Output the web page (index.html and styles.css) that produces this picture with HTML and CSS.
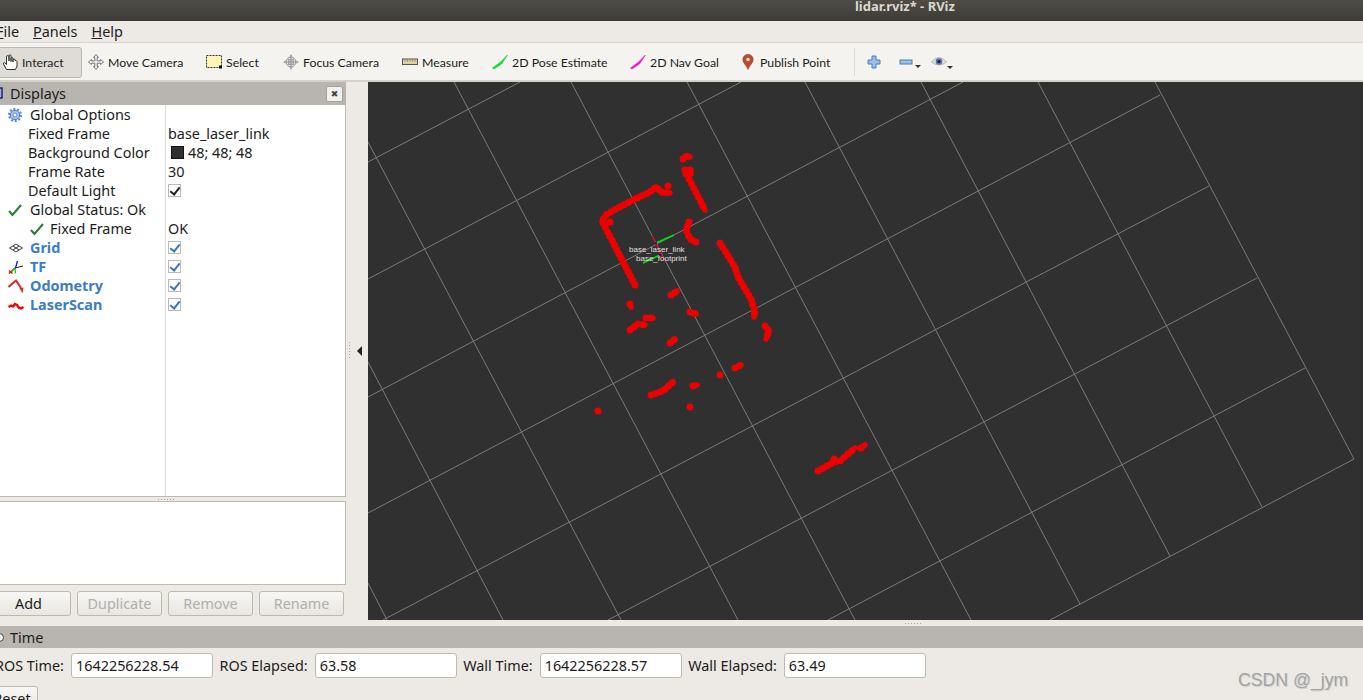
FILE: index.html
```html
<!DOCTYPE html>
<html lang="en">
<head>
    <meta charset="UTF-8">
    <title>lidar.rviz* - RViz</title>
    <link rel="stylesheet" href="styles.css">
</head>
<body>
<div class="window">
    <div class="titlebar"><span class="title">lidar.rviz* - RViz</span></div>

    <div class="menubar">
        <span class="menu-item"><u>F</u>ile</span>
        <span class="menu-item"><u>P</u>anels</span>
        <span class="menu-item"><u>H</u>elp</span>
    </div>

    <div class="toolbar">
        <div class="tool tool-interact active">
            <svg class="icon" viewBox="0 0 16 16"><path d="M4.5 15.5 L1.5 10 Q1 8.5 2.5 8.6 L4.5 10.5 V3 Q4.5 1.5 5.7 1.5 Q7 1.5 7 3 V7 V2 Q7 .8 8 .8 Q9 .8 9 2 V7.5 V4 Q10 3 11 4 V8 V5.5 Q12 4.5 13 5.5 V6.5 Q14.5 6 15 7.5 V12 L13.5 15.5 Z" fill="#fff" stroke="#333" stroke-width="1"/></svg>
            <span>Interact</span>
        </div>
        <div class="tool tool-move">
            <svg class="icon" viewBox="0 0 16 16"><path d="M8 .5 L10.5 3.5 H9.2 V6.8 H12.5 V5.5 L15.5 8 L12.5 10.5 V9.2 H9.2 V12.5 H10.5 L8 15.5 L5.5 12.5 H6.8 V9.2 H3.5 V10.5 L.5 8 L3.5 5.5 V6.8 H6.8 V3.5 H5.5 Z" fill="#eee" stroke="#777" stroke-width="1"/></svg>
            <span>Move Camera</span>
        </div>
        <div class="tool tool-select">
            <svg class="icon" viewBox="0 0 16 16"><rect x=".5" y="1.5" width="15" height="12" fill="#fdf6b4" stroke="#333" stroke-width="1" stroke-dasharray="2 1"/><rect x="13" y="11.5" width="3" height="3" fill="#111"/></svg>
            <span>Select</span>
        </div>
        <div class="tool tool-focus">
            <svg class="icon" viewBox="0 0 18 18"><circle cx="9" cy="9" r="5.5" fill="#e8e8e8" stroke="#888"/><path d="M9 1 V17 M1 9 H17 M6 6.5 H12 M6 11.5 H12 M6.500 6 V12 M11.500 6 V12" stroke="#888" fill="none"/><path d="M9 0 L11 3 H7 Z M9 18 L11 15 H7 Z M0 9 L3 7 V11 Z M18 9 L15 7 V11 Z" fill="#aaa"/></svg>
            <span>Focus Camera</span>
        </div>
        <div class="tool tool-measure">
            <svg class="icon" viewBox="0 0 16 16"><rect x=".5" y="5" width="15" height="5.500" fill="#ded39b" stroke="#555" stroke-width="1"/><path d="M3 5.500 V7.500 M5.500 5.500 V7.500 M8 5.500 V7.500 M10.500 5.500 V7.500 M13 5.500 V7.500" stroke="#777" stroke-width=".8"/></svg>
            <span>Measure</span>
        </div>
        <div class="tool tool-pose">
            <svg class="icon" viewBox="0 0 16 16"><path d="M.5 14 L8 8.500 L15.500 1 L9.500 10 L2 15 Z" fill="#00e832" stroke="#12c93a" stroke-width=".6"/></svg>
            <span>2D Pose Estimate</span>
        </div>
        <div class="tool tool-nav">
            <svg class="icon" viewBox="0 0 16 16"><path d="M.5 14 L8 8.500 L15.500 1 L9.500 10 L2 15 Z" fill="#f414d4" stroke="#e020c8" stroke-width=".6"/></svg>
            <span>2D Nav Goal</span>
        </div>
        <div class="tool tool-publish">
            <svg class="icon icon-pin" viewBox="0 0 12 16"><path d="M6 15.500 C4.500 11.500 .8 9 .8 5.500 A5.200 5.200 0 0 1 11.200 5.500 C11.200 9 7.500 11.500 6 15.500 Z" fill="#b5502c" stroke="#8a4a30" stroke-width=".6"/><circle cx="6" cy="5.500" r="1.800" fill="#efd9c8"/></svg>
            <span>Publish Point</span>
        </div>
        <div class="tool-sep"></div>
        <div class="tool-small tool-plus">
            <svg class="icon" viewBox="0 0 14 14"><path d="M5 1 H9 V5 H13 V9 H9 V13 H5 V9 H1 V5 H5 Z" fill="#9cc0e8" stroke="#4a7cb8" stroke-width="1"/></svg>
        </div>
        <div class="tool-small tool-minus">
            <svg class="icon" viewBox="0 0 14 14"><rect x="1" y="5" width="12" height="4" fill="#9cc0e8" stroke="#4a7cb8" stroke-width="1"/></svg>
            <i class="drop"></i>
        </div>
        <div class="tool-small tool-eye">
            <svg class="icon icon-eye" viewBox="0 0 16 12"><path d="M.5 6 Q8 -3 15.500 6 Q8 12 .5 6 Z" fill="#dfe0e4" stroke="#aaa" stroke-width=".8"/><circle cx="8" cy="5.500" r="3.300" fill="#5d73ae"/><circle cx="8" cy="5.500" r="1.500" fill="#16203c"/></svg>
            <i class="drop"></i>
        </div>
    </div>

    <div class="workspace">
        <div class="dock">
            <div class="panel-head">
                <svg class="panel-icon" viewBox="0 0 16 16"><rect x="1" y="2" width="14" height="10" fill="#a9a9ec" stroke="#23235a" stroke-width="1.500"/><path d="M5 14.500 H11" stroke="#23235a" stroke-width="1.500"/></svg>
                <span>Displays</span>
                <button class="panel-close">&#10006;</button>
            </div>

            <div class="tree">
                <div class="row">
                    <div class="name">
                        <svg class="row-icon" viewBox="0 0 14 14"><circle cx="7" cy="7" r="4.700" fill="#a8c4ec" stroke="#4a78c0" stroke-width="1"/><circle cx="7" cy="7" r="6" fill="none" stroke="#5a88cc" stroke-width="2" stroke-dasharray="2 1.700"/><circle cx="7" cy="7" r="2" fill="#fff" stroke="#4a78c0" stroke-width=".8"/></svg>
                        Global Options
                    </div>
                    <div class="value"></div>
                </div>
                <div class="row">
                    <div class="name child">Fixed Frame</div>
                    <div class="value">base_laser_link</div>
                </div>
                <div class="row">
                    <div class="name child">Background Color</div>
                    <div class="value"><i class="swatch"></i>48; 48; 48</div>
                </div>
                <div class="row">
                    <div class="name child">Frame Rate</div>
                    <div class="value">30</div>
                </div>
                <div class="row">
                    <div class="name child">Default Light</div>
                    <div class="value"><i class="checkbox dark"></i></div>
                </div>
                <div class="row">
                    <div class="name">
                        <svg class="row-icon" viewBox="0 0 14 14"><path d="M1 8 L4.500 12 L13 2" fill="none" stroke="#2b7a35" stroke-width="2"/></svg>
                        Global Status: Ok
                    </div>
                    <div class="value"></div>
                </div>
                <div class="row">
                    <div class="name nested">
                        <svg class="row-icon" viewBox="0 0 14 14"><path d="M1 8 L4.500 12 L13 2" fill="none" stroke="#2b7a35" stroke-width="2"/></svg>
                        Fixed Frame
                    </div>
                    <div class="value">OK</div>
                </div>
                <div class="row">
                    <div class="name display">
                        <svg class="row-icon" viewBox="0 0 16 16"><path d="M1.500 8 L8 4 L14.500 8 L8 12 Z M5 6 L11 10 M11 6 L5 10" fill="#eee" stroke="#444" stroke-width="1"/></svg>
                        Grid
                    </div>
                    <div class="value"><i class="checkbox"></i></div>
                </div>
                <div class="row">
                    <div class="name display">
                        <svg class="row-icon" viewBox="0 0 16 16"><path d="M7 9 L1 14.500 M1 11.500 L4.500 14.500" stroke="#e01010" stroke-width="1.500" fill="none"/><path d="M7 9 L7.500 14.500 M7 9 L3.500 12.500" stroke="#18c818" stroke-width="1.300"/><path d="M7 9 L15 7" stroke="#222" stroke-width="1"/><path d="M9.500 2 L7.500 9" stroke="#1010e0" stroke-width="1.300"/></svg>
                        TF
                    </div>
                    <div class="value"><i class="checkbox"></i></div>
                </div>
                <div class="row">
                    <div class="name display">
                        <svg class="row-icon" viewBox="0 0 16 16"><path d="M.5 9 L8 2.500 L13 10" fill="none" stroke="#d82828" stroke-width="2"/><path d="M14.500 15.500 L11.500 10 L15.500 9.500 Z" fill="#d82828"/></svg>
                        Odometry
                    </div>
                    <div class="value"><i class="checkbox"></i></div>
                </div>
                <div class="row">
                    <div class="name display">
                        <svg class="row-icon" viewBox="0 0 16 16"><path d="M.5 10 L3 8.500 L5 9.500 L7 7 L9 8 L11 11 L13 11.500 L15.500 10" fill="none" stroke="#f00" stroke-width="2.400"/></svg>
                        LaserScan
                    </div>
                    <div class="value"><i class="checkbox"></i></div>
                </div>
            </div>

            <div class="grip-h"><i></i></div>
            <div class="description"></div>

            <div class="panel-buttons">
                <button class="btn">Add</button>
                <button class="btn" disabled>Duplicate</button>
                <button class="btn" disabled>Remove</button>
                <button class="btn" disabled>Rename</button>
            </div>
        </div>

        <div class="collapse"><i class="collapse-dots"></i><i class="collapse-arrow"></i></div>

        <div class="viewport">
            <svg class="scene" viewBox="368 82 995 538" width="995" height="538">
                <defs>
                    <g id="scan-points">
                        <path d="M635 285 L602 221 L606 215 L616 209 L635 199 L650 192 L656 187 L661 192 L670 193"/>
                        <path d="M610 222 h.1 M668 186 h.1"/>
                        <path d="M683 159 L686 156 L690 157"/>
                        <path d="M685 170 L691 170 M686 174 L691 174 M689 179 L705 210" />
                        <path d="M689 222 L686 230 L690 239 L696 242"/>
                        <path d="M720 243 L735 267 L738 277 L751 299 L755 312 L754 317"/>
                        <path d="M671 295 L677 291 M630 304 L631 307 M690 312 L696 314 M646 318 L653 318"/>
                        <path d="M630 330 L638 324 L645 325 M670 343 L675 339 M765 326 L769 331 L766 339"/>
                        <path d="M651 395 L663 391 L673 382 M693 386 L697 385 M690 407 h.1 M720 375 h.1 M735 368 L741 365 M598 411 h.1"/>
                        <path d="M818 471 L834 462 L840 461 L855 448 M861 448 L865 445 M834 459 h.1"/>
                    </g>
                </defs>
                <path class="grid" d="M368 583 L387 620 M368 362 L503 620 M368 142 L621 620 M454 82 L738 620 M571 82 L855 620 M687 82 L971 620 M805 82 L1080 604 M921 82 L1170 556 M1038 82 L1262 507 M1155 82 L1354 459
                    M1354 459 L1050 620 M1305 368 L828 620 M1257 278 L608 620 M1209 186 L383 620 M1160 95 L368 513 M963 82 L368 397 M741 82 L368 279 M520 82 L368 162"/>
                <use class="scan" href="#scan-points"/>
                <use class="scan scan-dots" href="#scan-points"/>
                <path class="axis-y" d="M656 243 L674 235 M660 255 L643 263"/>
                <path class="axis-x" d="M652 236 L665 262"/>
                <circle class="axis-z" cx="656" cy="243" r="1"/>
                <circle class="axis-z" cx="660" cy="255" r="1"/>
                <text class="frame-label" x="629" y="252">base_laser_link</text>
                <text class="frame-label" x="636" y="261">base_footprint</text>
            </svg>
        </div>
    </div>

    <div class="grip-v"><i></i></div>

    <div class="time-head">
        <i class="radio"></i>
        <span>Time</span>
    </div>
    <div class="time-row">
        <label>ROS Time:</label><div class="field">1642256228.54</div>
        <label>ROS Elapsed:</label><div class="field">63.58</div>
        <label>Wall Time:</label><div class="field">1642256228.57</div>
        <label>Wall Elapsed:</label><div class="field">63.49</div>
    </div>
    <button class="btn btn-reset">Reset</button>
</div>
<div class="watermark">CSDN @_jym</div>
</body>
</html>
```

FILE: styles.css
```css
* {
    margin: 0;
    padding: 0;
    box-sizing: border-box;
}

html, body {
    height: 700px;
    overflow: hidden;
}

body {
    background-color: #edeae5;
    font-family: "Noto Sans", sans-serif;
    font-size: 14.4px;
    color: #1c1c1c;
}

/* the window runs off the left edge of the shot */
.window {
    width: 1377px;
    margin-left: -14px;
}

/* Title bar */
.titlebar {
    height: 21px;
    background: linear-gradient(#4f4c45, #3c3b37);
    position: relative;
    overflow: hidden;
}

.title {
    position: absolute;
    left: 869px;
    top: -4px;
    font-size: 13px;
    font-weight: bold;
    line-height: 20px;
    color: #dcd8cf;
    white-space: nowrap;
}

/* Menu */
.menubar {
    height: 21px;
    display: flex;
    align-items: center;
    padding-left: 10px;
    gap: 14px;
    background-color: #edeae5;
}

/* Toolbar */
.toolbar {
    height: 40px;
    display: flex;
    align-items: center;
    padding-top: 1px;
    background-color: #f5f3ef;
    border-top: 1px solid #d8d5cf;
    border-bottom: 2px solid #d4d1cb;
    font-family: "Lato", sans-serif;
    font-size: 12.3px;
}

.tool {
    display: flex;
    align-items: center;
    gap: 4px;
    flex: none;
    white-space: nowrap;
}

.icon {
    width: 16px;
    height: 16px;
    flex: none;
}

.tool-interact {
    width: 96px;
    height: 31px;
    margin-right: 6px;
    padding-left: 15px;
    background-color: #dfdcd8;
    border: 1px solid #bcb9b3;
    border-radius: 3px;
}

.tool-move { width: 118px; }
.tool-select { width: 77px; }
.tool-focus { width: 119px; }
.tool-measure { width: 90px; }
.tool-pose { width: 138px; }
.tool-nav { width: 112px; }
.tool-publish { width: 112px; }

.icon-pin {
    width: 12px;
    margin-right: 2px;
}

.tool-sep {
    width: 1px;
    height: 28px;
    background-color: #dcd9d3;
    margin-right: 12px;
}

.tool-small {
    position: relative;
    flex: none;
    display: flex;
    align-items: center;
}

.tool-small .icon {
    width: 14px;
    height: 14px;
}

.tool-plus { width: 32px; }
.tool-minus { width: 32px; }

.tool-small .icon-eye {
    width: 16px;
    height: 12px;
}

.drop {
    position: absolute;
    right: -6px;
    top: 10px;
    border-left: 3px solid transparent;
    border-right: 3px solid transparent;
    border-top: 3px solid #333;
}

.tool-minus .drop { right: 10px; }
.tool-eye .drop { right: -6px; }

/* Main row */
.workspace {
    height: 538px;
    display: flex;
}

.dock {
    width: 360px;
    flex: none;
    display: flex;
    flex-direction: column;
}

.panel-head {
    height: 23px;
    display: flex;
    align-items: center;
    padding-left: 1px;
    gap: 7px;
    background-color: #b8b4b0;
}

.panel-icon {
    width: 16px;
    height: 16px;
}

.panel-close {
    margin-left: auto;
    margin-right: 3px;
    width: 17px;
    height: 16px;
    font-size: 9px;
    line-height: 14px;
    color: #444;
    background-color: #f2f0ed;
    border: 1px solid #a5a19c;
    border-radius: 2px;
    font-family: "DejaVu Sans", sans-serif;
}

.tree {
    height: 392px;
    background: linear-gradient(#dcdcdc, #dcdcdc) 179px 0 / 1px 100% no-repeat #fff;
    border-right: 1px solid #bdb9b3;
    border-bottom: 1px solid #bdb9b3;
}

.row {
    height: 19px;
    display: grid;
    grid-template-columns: 180px 1fr;
    line-height: 19px;
}

.name {
    display: flex;
    align-items: center;
    padding-left: 22px;
    gap: 8px;
    white-space: nowrap;
}

.name.child { padding-left: 42px; }

.name.nested {
    padding-left: 44px;
    gap: 6px;
}

.name.display {
    gap: 6px;
    font-weight: bold;
    color: #3a7cc6;
}

.row-icon {
    width: 14px;
    height: 14px;
    flex: none;
}

.name.display .row-icon {
    width: 16px;
    height: 16px;
}

.value {
    padding-left: 2px;
    display: flex;
    align-items: center;
    white-space: nowrap;
}

.swatch {
    width: 13px;
    height: 13px;
    margin: 0 4px 0 3px;
    background-color: #303030;
    border: 1px solid #111;
}

.checkbox {
    position: relative;
    width: 13px;
    height: 13px;
    background-color: #fff;
    border: 1px solid #bdb9b3;
}

.checkbox::after {
    content: "";
    position: absolute;
    left: 3px;
    top: 0;
    width: 4px;
    height: 8px;
    border-right: 2px solid #3c76b8;
    border-bottom: 2px solid #3c76b8;
    transform: rotate(38deg);
}

.checkbox.dark::after {
    border-color: #222;
}

.grip-h {
    height: 4px;
    display: flex;
    align-items: center;
    justify-content: center;
}

.grip-h i, .grip-v i {
    display: block;
    width: 16px;
    height: 1px;
    background: repeating-linear-gradient(90deg, #a9a5a0 0 1px, transparent 1px 3px);
}

.description {
    height: 84px;
    background-color: #fff;
    border: 1px solid #bdb9b3;
    border-left: none;
}

.panel-buttons {
    display: flex;
    gap: 6px;
    margin-top: 6px;
}

.btn {
    width: 85px;
    height: 25px;
    font-family: inherit;
    font-size: 14.4px;
    color: #1c1c1c;
    background: linear-gradient(#f8f7f5, #e9e6e2);
    border: 1px solid #bcb8b2;
    border-radius: 3px;
}

.btn:disabled {
    color: #b2aeaa;
}

/* handle between dock and 3D view */
.collapse {
    width: 22px;
    flex: none;
    display: flex;
    align-items: center;
    gap: 7px;
    padding-left: 3px;
}

.collapse-dots {
    width: 1px;
    height: 18px;
    background: repeating-linear-gradient(#a9a5a0 0 1px, transparent 1px 3px);
}

.collapse-arrow {
    border-top: 5px solid transparent;
    border-bottom: 5px solid transparent;
    border-right: 5px solid #222;
}

/* 3D view */
.viewport {
    flex: 1;
    background-color: #303030;
    overflow: hidden;
}

.scene {
    display: block;
}

.grid {
    fill: none;
    stroke: #7b7b7b;
    stroke-width: 1;
}

.scan {
    fill: none;
    stroke: #ee0000;
    stroke-width: 5.5;
    stroke-linecap: round;
    stroke-linejoin: round;
}

/* second pass so the scan reads as separate points */
.scan-dots {
    stroke-width: 7;
    stroke-dasharray: 0 5;
}

.axis-y {
    stroke: #00e600;
    stroke-width: 1.500;
}

.axis-x {
    stroke: #e60000;
    stroke-width: 1.200;
}

.axis-z {
    fill: #0000e6;
}

.frame-label {
    font-family: "Liberation Sans", sans-serif;
    font-size: 8px;
    fill: #e0e0e0;
}

/* Time panel */
.grip-v {
    height: 6px;
    display: flex;
    align-items: center;
    padding-left: 919px;
}

.time-head {
    height: 22px;
    display: flex;
    align-items: center;
    gap: 6px;
    padding-left: 9px;
    background-color: #b8b4b0;
}

.radio {
    width: 9px;
    height: 9px;
    background-color: #eee;
    border: 1px solid #444;
    border-radius: 50%;
}

.time-row {
    display: flex;
    align-items: center;
    margin-top: 5px;
    padding-left: 9px;
}

.time-row label {
    margin-right: 7px;
    white-space: nowrap;
}

.field {
    width: 142px;
    height: 25px;
    margin-right: 6.5px;
    padding-left: 4px;
    line-height: 23px;
    background-color: #fff;
    border: 1px solid #bdb9b3;
    border-radius: 3px;
}

.btn-reset {
    display: block;
    width: 52px;
    margin-top: 8px;
}

.watermark {
    position: absolute;
    left: 1238px;
    top: 670px;
    font-family: "Liberation Sans", sans-serif;
    font-size: 17.7px;
    color: #a3a3a3;
    text-shadow: 1px 1px 1px #cfcfcf;
    white-space: nowrap;
}
```
